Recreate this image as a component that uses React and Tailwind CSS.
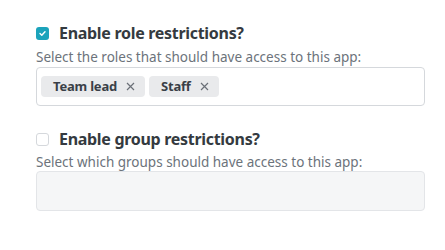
import React from "react";

function Chip({ label }) {
  return (
    <div className="flex h-[21px] items-center gap-[9px] rounded-[4px] bg-[#e9eaec] pl-[12px] pr-[10px]">
      <span className="text-[13px] font-bold tracking-[-0.2px] text-[#3a3f47]">{label}</span>
      <svg width="9" height="9" viewBox="0 0 9 9" className="text-[#6b7078]">
        <path d="M1 1L8 8M8 1L1 8" stroke="currentColor" strokeWidth="1.2" />
      </svg>
    </div>
  );
}

export default function App() {
  return (
    <div
      className="h-[250px] w-[445px] bg-white pl-[36px] pr-[20px] pt-[23px]"
      style={{ fontFamily: '"Noto Sans", "Open Sans", sans-serif' }}
    >
      <div className="flex items-center gap-[10px]">
        <div className="flex h-[13px] w-[13px] items-center justify-center rounded-[3px] bg-[#1ba3bb]">
          <svg width="9" height="9" viewBox="0 0 9 9">
            <path d="M2 4.6L3.8 6.3L7 2.8" stroke="white" strokeWidth="1.4" fill="none" strokeLinecap="round" strokeLinejoin="round" />
          </svg>
        </div>
        <span className="text-[16px] font-bold leading-[21px] tracking-[-0.3px] text-[#343a40]">Enable role restrictions?</span>
      </div>
      <div className="mt-[5px] text-[13.5px] leading-[17px] text-[#6c737b]">
        Select the roles that should have access to this app:
      </div>
      <div className="mt-[1px] flex h-[39px] items-center gap-[4px] rounded-[4px] border border-[#d5d8dc] px-[4px]">
        <Chip label="Team lead" />
        <Chip label="Staff" />
      </div>
      <div className="mt-[23px] flex items-center gap-[10px]">
        <div className="h-[13px] w-[13px] rounded-[3px] border border-[#d5d8dc] bg-white" />
        <span className="text-[16px] font-bold leading-[21px] tracking-[-0.3px] text-[#343a40]">Enable group restrictions?</span>
      </div>
      <div className="mt-[4px] text-[13.5px] leading-[17px] text-[#6c737b]">
        Select which groups should have access to this app:
      </div>
      <div className="mt-[0px] h-[40px] rounded-[4px] border border-[#e3e5e8] bg-[#f5f6f7]" />
    </div>
  );
}
